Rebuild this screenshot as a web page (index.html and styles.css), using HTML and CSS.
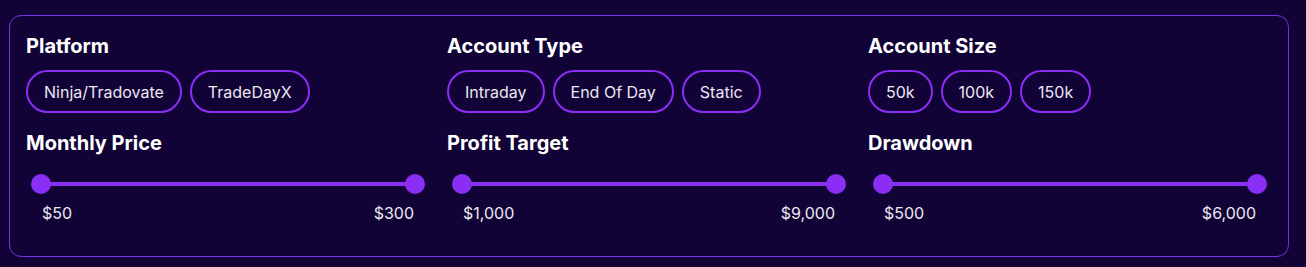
FILE: index.html
```html
<!DOCTYPE html>
<html lang="en">
  <head>
    <meta charset="UTF-8" />
    <meta name="viewport" content="width=device-width, initial-scale=1.0" />
    <title>Filters</title>
    <link rel="stylesheet" href="styles.css">
  </head>
  <body>
    <div class="filters">
      <div class="filter">
        <div class="filter-title">Platform</div>
        <div class="chips">
          <button class="chip">Ninja/Tradovate</button>
          <button class="chip">TradeDayX</button>
        </div>
      </div>

      <div class="filter">
        <div class="filter-title">Account Type</div>
        <div class="chips">
          <button class="chip">Intraday</button>
          <button class="chip">End Of Day</button>
          <button class="chip">Static</button>
        </div>
      </div>

      <div class="filter">
        <div class="filter-title">Account Size</div>
        <div class="chips">
          <button class="chip">50k</button>
          <button class="chip">100k</button>
          <button class="chip">150k</button>
        </div>
      </div>

      <div class="filter">
        <div class="filter-title">Monthly Price</div>
        <div class="range">
          <div class="track">
            <span class="thumb thumb-min"></span>
            <span class="thumb thumb-max"></span>
          </div>
        </div>
        <div class="range-labels">
          <span>$50</span>
          <span>$300</span>
        </div>
      </div>

      <div class="filter">
        <div class="filter-title">Profit Target</div>
        <div class="range">
          <div class="track">
            <span class="thumb thumb-min"></span>
            <span class="thumb thumb-max"></span>
          </div>
        </div>
        <div class="range-labels">
          <span>$1,000</span>
          <span>$9,000</span>
        </div>
      </div>

      <div class="filter">
        <div class="filter-title">Drawdown</div>
        <div class="range">
          <div class="track">
            <span class="thumb thumb-min"></span>
            <span class="thumb thumb-max"></span>
          </div>
        </div>
        <div class="range-labels">
          <span>$500</span>
          <span>$6,000</span>
        </div>
      </div>
    </div>
  </body>
</html>
```

FILE: styles.css
```css
body {
  font-family: Inter, "Noto Sans", sans-serif;
  background: #110336;
  margin: 0;
  padding: 15px 0 0 9px;
}

.filters {
  width: 1280px;
  box-sizing: border-box;
  border: 1px solid #7a2ee6;
  border-radius: 12px;
  padding: 16px 16px 32px;
  display: grid;
  grid-template-columns: repeat(3, 1fr);
  column-gap: 17px;
  row-gap: 16px;
}

.filter-title {
  color: #ffffff;
  font-size: 20px;
  line-height: 28px;
  font-weight: 700;
  margin-bottom: 10px;
}

.chips {
  display: flex;
  gap: 8px;
}

.chip {
  font-family: inherit;
  font-size: 16px;
  color: #ebe8f2;
  background: transparent;
  border: 2px solid #8a2ef5;
  border-radius: 999px;
  height: 43px;
  padding: 0 16px;
  cursor: pointer;
}

.range {
  padding: 0 15px;
  height: 20px;
  display: flex;
  align-items: center;
  margin-top: 17px;
}

.track {
  position: relative;
  flex: 1;
  height: 4px;
  background: #8a2ef5;
}

.thumb {
  position: absolute;
  top: -8px;
  width: 20px;
  height: 20px;
  border-radius: 50%;
  background: #8a2ef5;
}

.thumb-min {
  left: -10px;
}

.thumb-max {
  right: -10px;
}

.range-labels {
  display: flex;
  justify-content: space-between;
  padding: 0 16px;
  margin-top: 8px;
  color: #ebe8f2;
  font-size: 16px;
  line-height: 22px;
}
```
